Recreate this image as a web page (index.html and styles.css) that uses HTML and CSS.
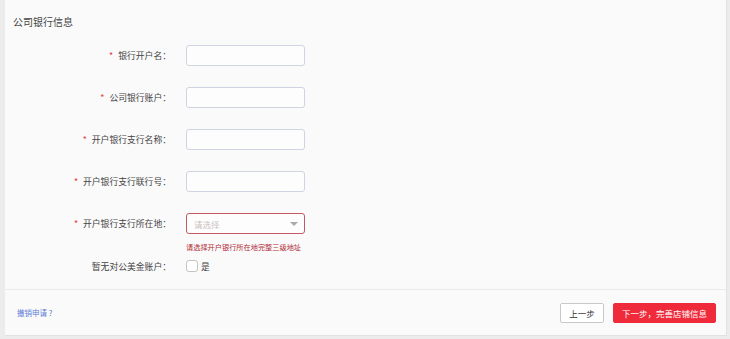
FILE: index.html
```html
<!DOCTYPE html>
<html lang="zh-CN">
<head>
<meta charset="utf-8">
<title>公司银行信息</title>
<link rel="stylesheet" href="styles.css">
</head>
<body>
<div class="card">
  <div class="title">公司银行信息</div>
  <div class="form">
    <div class="row">
      <div class="label"><span class="req">*</span>银行开户名：</div>
      <div class="input"></div>
    </div>
    <div class="row">
      <div class="label"><span class="req">*</span>公司银行账户：</div>
      <div class="input"></div>
    </div>
    <div class="row">
      <div class="label"><span class="req">*</span>开户银行支行名称：</div>
      <div class="input"></div>
    </div>
    <div class="row">
      <div class="label"><span class="req">*</span>开户银行支行联行号：</div>
      <div class="input"></div>
    </div>
    <div class="row">
      <div class="label"><span class="req">*</span>开户银行支行所在地：</div>
      <div class="input select">
        <span class="placeholder">请选择</span>
        <span class="arrow"></span>
      </div>
    </div>
    <div class="error">请选择开户银行所在地完整三级地址</div>
    <div class="row check-row">
      <div class="label">暂无对公美金账户：</div>
      <div class="check"><span class="box"></span><span class="yes">是</span></div>
    </div>
  </div>
  <div class="footer">
    <a class="cancel">撤销申请 ?</a>
    <div class="actions">
      <button class="btn prev">上一步</button>
      <button class="btn next">下一步，完善店铺信息</button>
    </div>
  </div>
</div>
</body>
</html>
```
FILE: styles.css
```css
html, body {
  margin: 0;
  padding: 0;
  background: #ececec;
  font-family: "Noto Sans CJK SC", "Noto Sans", sans-serif;
  color: #333;
}
.card {
  box-sizing: border-box;
  margin-left: 5px;
  width: 722px;
  height: 336px;
  background: #fafafa;
  border-right: 1px solid #e2e2e2;
  border-bottom: 1px solid #e2e2e2;
  display: flex;
  flex-direction: column;
}
.title {
  padding: 15px 0 0 8px;
  font-size: 10px;
  line-height: 14px;
  color: #444;
}
.form {
  margin-top: 16px;
  display: flex;
  flex-direction: column;
}
.row {
  display: flex;
  align-items: center;
  height: 21px;
  margin-bottom: 21px;
}
.label {
  width: 166px;
  text-align: right;
  font-size: 8.8px;
  color: #444;
  white-space: nowrap;
}
.req {
  color: #e0383e;
  margin-right: 5px;
}
.input {
  box-sizing: border-box;
  margin-left: 15px;
  width: 119px;
  height: 21px;
  border: 1px solid #cfd3e2;
  border-radius: 3px;
  background: #fdfdfd;
}
.select {
  border-color: #c35a62;
  display: flex;
  align-items: center;
  justify-content: space-between;
  padding: 0 6px 0 7px;
}
.placeholder {
  font-size: 8.5px;
  color: #cbbfc1;
}
.arrow {
  width: 0;
  height: 0;
  border-left: 4px solid transparent;
  border-right: 4px solid transparent;
  border-top: 4px solid #aaa;
}
.row:nth-child(5) {
  margin-bottom: 8px;
}
.error {
  margin-left: 181px;
  font-size: 7.2px;
  line-height: 10px;
  color: #b02a35;
  margin-bottom: 7px;
}
.check-row {
  height: 14px;
  margin-bottom: 16px;
}
.check {
  margin-left: 15px;
  display: flex;
  align-items: center;
}
.box {
  box-sizing: border-box;
  width: 12px;
  height: 12px;
  border: 1px solid #c4c4c4;
  border-radius: 3px;
  background: #fff;
}
.yes {
  margin-left: 3px;
  font-size: 8.8px;
  color: #444;
}
.footer {
  flex: 1;
  border-top: 1px solid #ebebeb;
  display: flex;
  align-items: center;
  justify-content: space-between;
  padding: 0 10px 0 12px;
}
.cancel {
  font-size: 7.5px;
  color: #5a7bd6;
}
.actions {
  display: flex;
  gap: 9px;
}
.btn {
  box-sizing: border-box;
  height: 20px;
  font-family: inherit;
  font-size: 8.5px;
  border-radius: 2px;
  padding: 0;
  cursor: pointer;
}
.prev {
  width: 44px;
  background: #fff;
  border: 1px solid #c9c9c9;
  color: #333;
}
.next {
  width: 103px;
  background: #ef2b3b;
  border: 1px solid #ef2b3b;
  color: #fff;
}
```
